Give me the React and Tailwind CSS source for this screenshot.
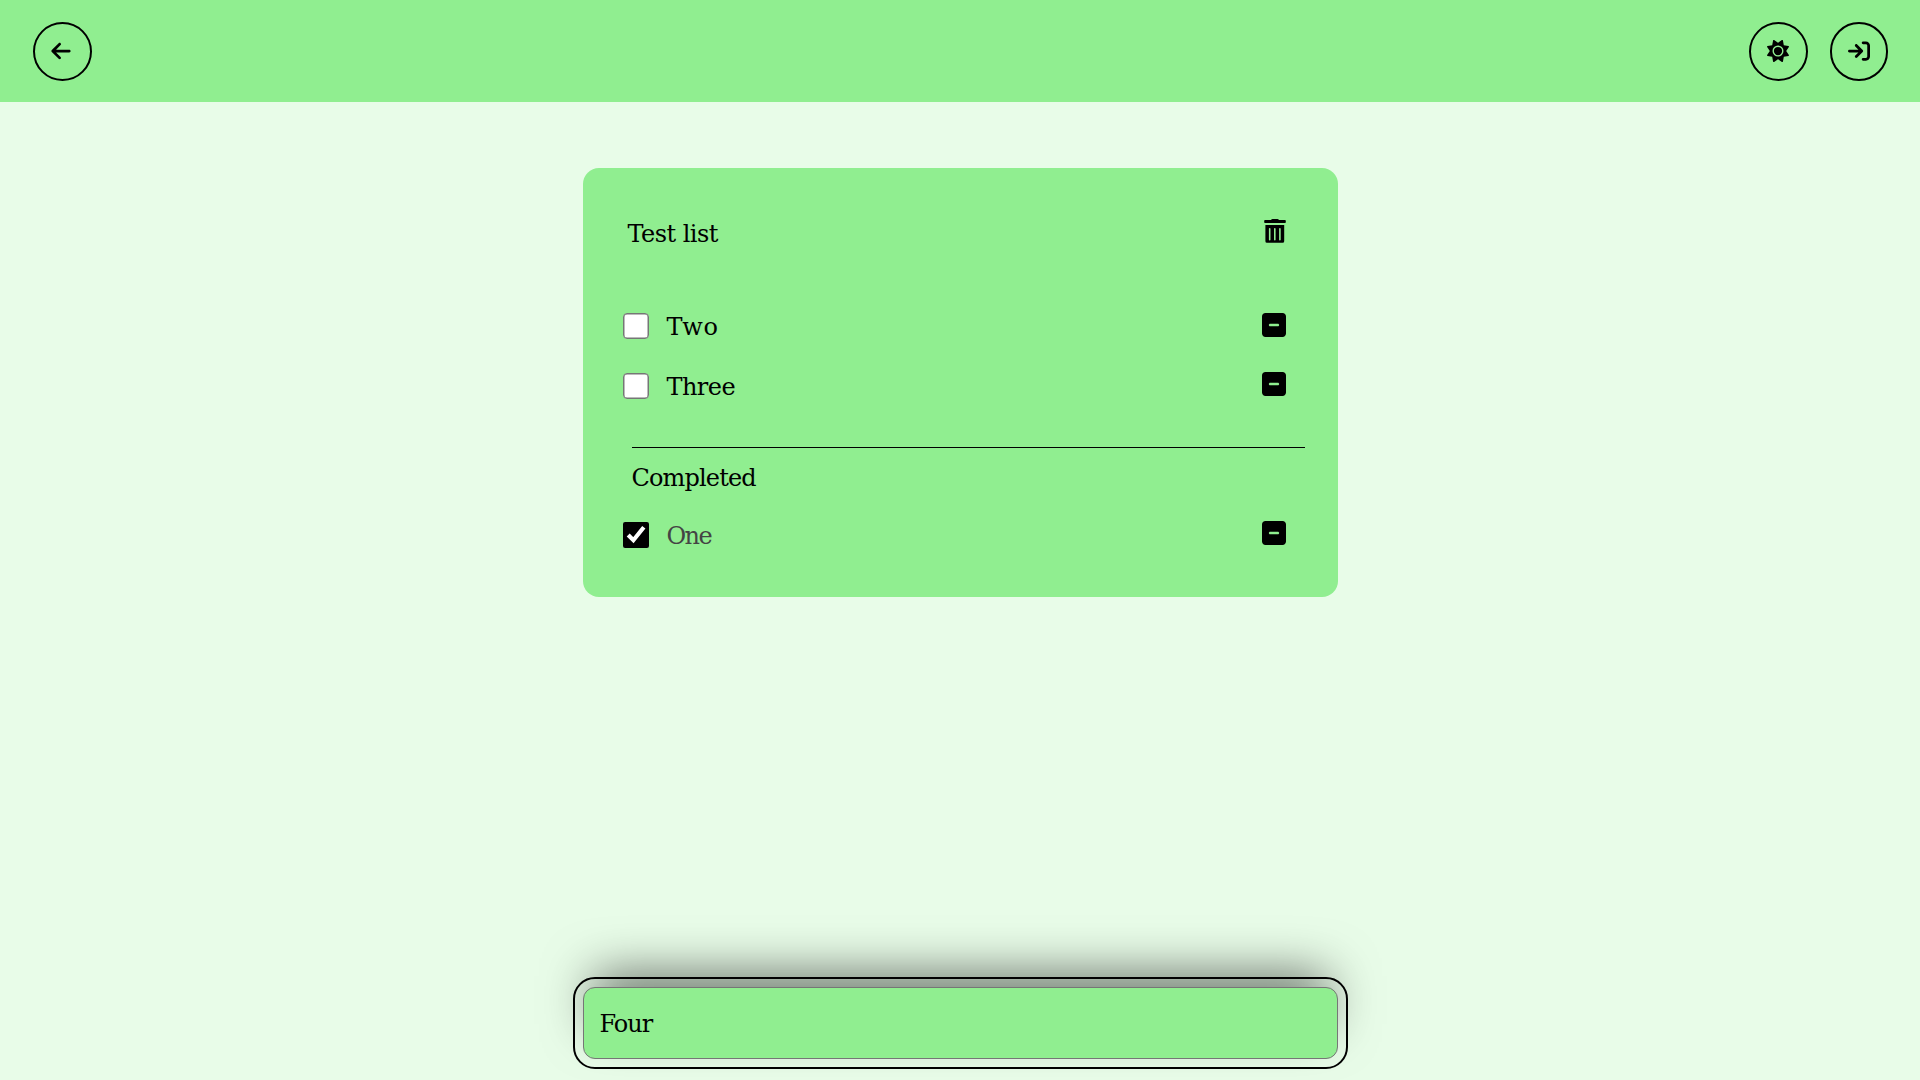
import { useState } from "react";
import {
  FaArrowLeft,
  FaArrowRightToBracket,
  FaSquareMinus,
  FaSun,
} from "react-icons/fa6";

function RoundButton({ label, width = "w-[59px]", children }) {
  return (
    <button
      aria-label={label}
      className={`flex h-[59px] ${width} items-center justify-center rounded-full border-2 border-black pb-[2px]`}
    >
      {children}
    </button>
  );
}

function TrashIcon() {
  return (
    <svg viewBox="0 0 22 24" className="h-[24px] w-[22px]" fill="currentColor">
      <path d="M7.2.8Q7.6 0 8.5 0h5q.9 0 1.3.8L15 1.1h6a.8.8 0 0 1 .8.8v1.3a.8.8 0 0 1-.8.8H1a.8.8 0 0 1-.8-.8V1.900a.8.8 0 0 1 .8-.8h6z" />
      <path
        fillRule="evenodd"
        d="M1.400 6h18.800v16.200a1.600 1.600 0 0 1-1.600 1.600H3a1.600 1.600 0 0 1-1.600-1.600zM5.700 9a.8.8 0 0 0-.8.8v10.900a.8.8 0 0 0 1.600 0V9.800a.8.8 0 0 0-.8-.8zM10.800 9a.8.8 0 0 0-.8.8v10.900a.8.8 0 0 0 1.600 0V9.800a.8.8 0 0 0-.8-.8zM15.900 9a.8.8 0 0 0-.8.8v10.900a.8.8 0 0 0 1.600 0V9.800a.8.8 0 0 0-.8-.8z"
      />
    </svg>
  );
}

function Item({ text, done, spacing, lift, onToggle }) {
  return (
    <li className="flex h-[26px] items-center">
      <input
        type="checkbox"
        checked={done}
        onChange={onToggle}
        aria-label={text}
        className={`h-[26px] w-[26px] shrink-0 accent-black ${done ? "" : "appearance-none rounded-[4px] border border-[#767676] bg-white shadow-[inset_0_0_0_0.5px_#767676]"}`}
      />
      <span className={`ml-[18px] flex-1 pt-px leading-[26px] ${spacing} ${done ? "text-[#444]" : "text-black"}`}>
        {text}
      </span>
      <button aria-label={`Remove ${text}`} className={`mr-[52px] ${lift}`}>
        <FaSquareMinus className="h-[28px] w-[24px]" />
      </button>
    </li>
  );
}

export default function App() {
  const [draft, setDraft] = useState("Four");
  const [done, setDone] = useState({ One: true, Two: false, Three: false });
  const toggle = (name) => setDone({ ...done, [name]: !done[name] });

  return (
    <div className="flex h-screen flex-col overflow-hidden bg-[#e8fce8] font-['Roboto_Slab','DejaVu_Serif',serif] text-[24px] text-black">
      <header className="flex h-[102px] shrink-0 items-center justify-between bg-[#90ee90] pr-[32px] pl-[33px] pt-px">
        <RoundButton label="Back">
          <FaArrowLeft className="mr-[3px] h-[22px] w-[20px]" />
        </RoundButton>
        <div className="flex gap-[22px]">
          <RoundButton label="Toggle theme">
            <FaSun className="mr-px h-[22px] w-[22px]" />
          </RoundButton>
          <RoundButton label="Log out" width="w-[58px]">
            <FaArrowRightToBracket className="h-[22px] w-[22px]" />
          </RoundButton>
        </div>
      </header>

      <main className="mx-auto flex w-[755px] flex-1 flex-col justify-between pt-[66px] pb-[21px]">
        <section className="flex h-[429px] flex-col rounded-2xl bg-[#90ee90] pl-10">
          <div className="mt-[50px] flex h-[30px] items-center justify-between pr-[52px] pl-[5px]">
            <h1 className="pt-px leading-[30px] tracking-[-0.55px]">Test list</h1>
            <button aria-label="Delete list" className="-mt-[4px]">
              <TrashIcon />
            </button>
          </div>
          <ul className="mt-[65px] flex flex-col gap-[34px]">
            <Item text="Two" done={done.Two} spacing="tracking-[0.7px]" lift="-mt-[2px]" onToggle={() => toggle("Two")} />
            <Item text="Three" done={done.Three} spacing="tracking-[-0.55px]" lift="-mt-[4px]" onToggle={() => toggle("Three")} />
          </ul>
          <div className="mt-12 mr-[33px] ml-[9px] border-t border-black pt-[15px]">
            <h2 className="leading-[30px] tracking-[-0.85px]">Completed</h2>
          </div>
          <ul className="mt-[29px]">
            <Item text="One" done={done.One} spacing="tracking-[-1.6px]" lift="-mt-[4px]" onToggle={() => toggle("One")} />
          </ul>
        </section>

        <input
          type="text"
          value={draft}
          onChange={(e) => setDraft(e.target.value)}
          aria-label="New item"
          className="h-[72px] w-full rounded-[12px] border border-[#767676] bg-[#90ee90] px-[16px] pt-px tracking-[-1px] shadow-[0_-23px_50px_-11px_rgba(0,0,0,0.58)] outline-2 outline-offset-8 outline-black"
        />
      </main>
    </div>
  );
}
